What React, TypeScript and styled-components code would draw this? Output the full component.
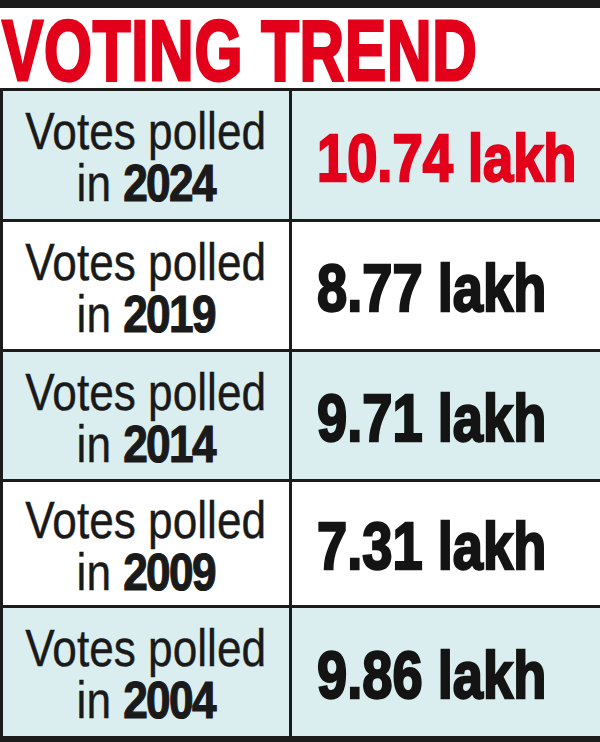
import React from "react";
import styled, { createGlobalStyle } from "styled-components";

const GlobalStyle = createGlobalStyle`
  html, body { margin: 0; padding: 0; background: #ffffff; }
  * { box-sizing: border-box; }
`;

const Page = styled.div`
  width: 600px;
  height: 742px;
  display: flex;
  flex-direction: column;
  background: #ffffff;
  overflow: hidden;
`;

const TopBar = styled.div`
  height: 8px;
  background: #1c1c1c;
  flex: none;
`;

const TitleBar = styled.div`
  height: 80px;
  flex: none;
  padding: 6px 0 0 2px;
`;

const TitleText = styled.h1`
  margin: 0;
  display: inline-block;
  font-family: "Liberation Sans", Arial, sans-serif;
  font-weight: 700;
  font-size: 85px;
  line-height: 74px;
  color: #e2001a;
  -webkit-text-stroke: 3px #e2001a;
  white-space: nowrap;
  transform: scaleX(0.727);
  transform-origin: left top;
  letter-spacing: 1px;
`;

const Table = styled.div`
  flex: 1;
  display: flex;
  flex-direction: column;
  border-top: 3px solid #1c1c1c;
  border-left: 3px solid #1c1c1c;
`;

const Row = styled.div<{ $shaded: boolean; $h: number; $first: boolean }>`
  display: grid;
  grid-template-columns: 289px 1fr;
  flex: none;
  height: ${(p) => (p.$first ? p.$h : p.$h + 3)}px;
  border-top: ${(p) => (p.$first ? "none" : "3px solid #1c1c1c")};
  background: ${(p) => (p.$shaded ? "#daeef0" : "#ffffff")};
`;

const LabelCell = styled.div`
  border-right: 3px solid #1c1c1c;
  display: flex;
  align-items: center;
  justify-content: center;
  padding-top: 4px;
`;

const LabelText = styled.div`
  font-family: "Liberation Sans", Arial, sans-serif;
  font-size: 52px;
  line-height: 52px;
  color: #1a1a1a;
  text-align: center;
  white-space: nowrap;
  transform: scaleX(0.85);
  transform-origin: center;
  -webkit-text-stroke: 0.4px #1a1a1a;
`;

const Line = styled.div`
  display: block;
`;

const Year = styled.span`
  font-weight: 700;
  letter-spacing: -2px;
  -webkit-text-stroke: 1.2px #1a1a1a;
`;

const ValueCell = styled.div`
  display: flex;
  align-items: center;
  padding: 4px 0 0 25px;
`;

const ValueText = styled.div<{ $red: boolean }>`
  font-family: "Liberation Sans", Arial, sans-serif;
  font-weight: 700;
  font-size: 67px;
  line-height: 67px;
  white-space: nowrap;
  color: ${(p) => (p.$red ? "#e2001a" : "#141414")};
  -webkit-text-stroke: 2.4px ${(p) => (p.$red ? "#e2001a" : "#141414")};
  transform: scaleX(0.81);
  transform-origin: left center;
`;

const BottomBar = styled.div`
  height: 6px;
  flex: none;
  background: #1c1c1c;
`;

const rows = [
  { year: "2024", value: "10.74 lakh", red: true, h: 128 },
  { year: "2019", value: "8.77 lakh", red: false, h: 127 },
  { year: "2014", value: "9.71 lakh", red: false, h: 127 },
  { year: "2009", value: "7.31 lakh", red: false, h: 123 },
  { year: "2004", value: "9.86 lakh", red: false, h: 128 },
];

export default function App() {
  return (
    <>
      <GlobalStyle />
      <Page>
        <TopBar />
        <TitleBar>
          <TitleText>VOTING TREND</TitleText>
        </TitleBar>
        <Table>
          {rows.map((r, i) => (
            <Row key={r.year} $shaded={i % 2 === 0} $h={r.h} $first={i === 0}>
              <LabelCell>
                <LabelText>
                  <Line>Votes polled</Line>
                  <Line>
                    in <Year>{r.year}</Year>
                  </Line>
                </LabelText>
              </LabelCell>
              <ValueCell>
                <ValueText $red={r.red}>{r.value}</ValueText>
              </ValueCell>
            </Row>
          ))}
        </Table>
        <BottomBar />
      </Page>
    </>
  );
}
